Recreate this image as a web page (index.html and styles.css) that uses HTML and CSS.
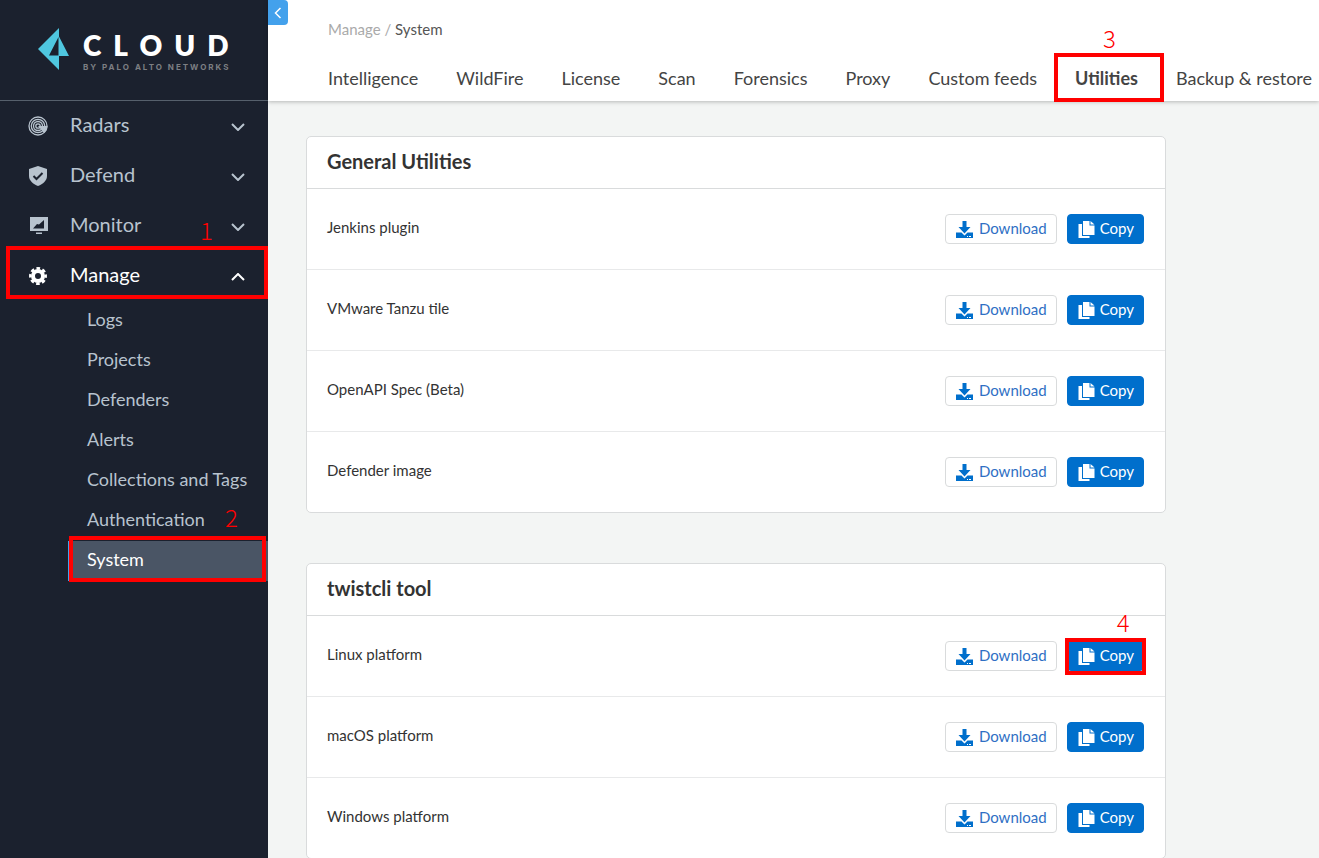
FILE: index.html
```html
<!DOCTYPE html>
<html lang="en">
<head>
<meta charset="utf-8">
<title>Manage / System</title>
<link rel="stylesheet" href="styles.css">
</head>
<body>
<svg class="sprite" aria-hidden="true">
  <symbol id="chevron" viewBox="0 0 14 8"><path d="M1 1l6 6 6-6" fill="none" stroke="currentColor" stroke-width="2"/></symbol>
  <symbol id="download" viewBox="0 0 17 17"><path d="M6.500 0h4v6h4L8.500 12.500 2.500 6h4z" fill="currentColor"/><path d="M0 11.500h5.500L8.500 14.500l3-3H17V17H0z" fill="currentColor"/><path d="M11 15.500h1M13 15.500h2" stroke="#fff" stroke-width="1"/></symbol>
  <symbol id="copy" viewBox="0 0 16 17"><path d="M4.500 0H11v4.500h5V14H4.500z" fill="currentColor"/><path d="M12 0l4 3.500h-4z" fill="currentColor"/><path d="M0 3h3.500v12H11v2H0z" fill="currentColor"/></symbol>
</svg>
<div class="app">
  <aside class="sidebar">
    <div class="brand">
      <svg class="brand-mark" viewBox="0 0 31 42" aria-hidden="true"><path fill="#4fc7e0" fill-rule="evenodd" d="M21 0v8.500L31 28H21v14L0 21zM20.500 9L11 27.500h9.500z"/></svg>
      <div class="brand-text">
        <span class="brand-name">CLOUD</span>
        <span class="brand-by">BY PALO ALTO NETWORKS</span>
      </div>
    </div>
    <nav class="nav">
      <button class="nav-item" type="button">
        <svg class="nav-icon" viewBox="0 0 20 20" aria-hidden="true"><g fill="none" stroke="currentColor" stroke-width="1.300"><circle cx="10" cy="10" r="9"/><circle cx="10" cy="10" r="6.700"/><circle cx="10" cy="10" r="4.500"/><circle cx="10" cy="10" r="2.200"/></g><path fill="currentColor" d="M10 10h9.500a9.500 9.500 0 0 1-3.500 7z"/></svg>
        <span class="nav-label">Radars</span><svg class="chevron"><use href="#chevron"/></svg>
      </button>
      <button class="nav-item" type="button">
        <svg class="nav-icon" viewBox="0 0 20 20" aria-hidden="true"><path fill="currentColor" d="M10 0l9 3v7c0 4.500-4 8-9 10-5-2-9-5.500-9-10V3z"/><path d="M5.500 10l3 3 6-6" fill="none" stroke="#1b212e" stroke-width="2"/></svg>
        <span class="nav-label">Defend</span><svg class="chevron"><use href="#chevron"/></svg>
      </button>
      <button class="nav-item" type="button">
        <svg class="nav-icon" viewBox="0 0 20 20" aria-hidden="true"><path fill="currentColor" fill-rule="evenodd" d="M2 1h18v14H2zM5 12.500h11V4l-5 4.500-2-.5z"/><path fill="currentColor" d="M8 16.500h6v1.500H8z"/></svg>
        <span class="nav-label">Monitor</span><svg class="chevron"><use href="#chevron"/></svg>
      </button>
      <div class="marked">
        <button class="nav-item is-open" type="button" aria-expanded="true">
          <svg class="nav-icon" viewBox="0 0 20 20" aria-hidden="true"><g fill="none" stroke="currentColor"><circle cx="10" cy="10" r="5" stroke-width="4"/><circle cx="10" cy="10" r="7.700" stroke-width="2.500" stroke-dasharray="3.600 2.450" stroke-dashoffset="1.800"/></g></svg>
          <span class="nav-label">Manage</span><svg class="chevron"><use href="#chevron"/></svg>
        </button>
        <span class="frame frame-manage"></span><span class="step step-manage">1</span>
      </div>
      <ul class="subnav">
        <li><a href="#">Logs</a></li>
        <li><a href="#">Projects</a></li>
        <li><a href="#">Defenders</a></li>
        <li><a href="#">Alerts</a></li>
        <li><a href="#">Collections and Tags</a></li>
        <li><a href="#">Authentication</a></li>
        <li class="marked"><a class="is-current" href="#" aria-current="page">System</a><span class="frame frame-system"></span><span class="step step-system">2</span></li>
      </ul>
    </nav>
  </aside>
  <div class="content">
    <header class="topbar">
      <button class="collapse" type="button" aria-label="Collapse menu"><svg viewBox="0 0 8 12" aria-hidden="true"><path d="M6.500 1l-5 5 5 5" fill="none" stroke="#fff" stroke-width="1.500"/></svg></button>
      <div class="crumbs"><a href="#">Manage</a> <span>/</span> <b>System</b></div>
      <nav class="tabs">
        <a href="#">Intelligence</a><a href="#">WildFire</a><a href="#">License</a><a href="#">Scan</a><a href="#">Forensics</a><a href="#">Proxy</a><a href="#">Custom feeds</a>
        <span class="marked"><a class="is-active" href="#">Utilities</a><span class="frame frame-tab"></span><span class="step step-tab">3</span></span>
        <a href="#">Backup &amp; restore</a>
      </nav>
    </header>
    <main class="panels">
      <section class="card">
        <h2>General Utilities</h2>
        <div class="row"><span>Jenkins plugin</span><button class="btn" type="button"><svg class="icon"><use href="#download"/></svg>Download</button><button class="btn btn-primary" type="button"><svg class="icon"><use href="#copy"/></svg>Copy</button></div>
        <div class="row"><span>VMware Tanzu tile</span><button class="btn" type="button"><svg class="icon"><use href="#download"/></svg>Download</button><button class="btn btn-primary" type="button"><svg class="icon"><use href="#copy"/></svg>Copy</button></div>
        <div class="row"><span>OpenAPI Spec (Beta)</span><button class="btn" type="button"><svg class="icon"><use href="#download"/></svg>Download</button><button class="btn btn-primary" type="button"><svg class="icon"><use href="#copy"/></svg>Copy</button></div>
        <div class="row"><span>Defender image</span><button class="btn" type="button"><svg class="icon"><use href="#download"/></svg>Download</button><button class="btn btn-primary" type="button"><svg class="icon"><use href="#copy"/></svg>Copy</button></div>
      </section>
      <section class="card">
        <h2>twistcli tool</h2>
        <div class="row"><span>Linux platform</span><button class="btn" type="button"><svg class="icon"><use href="#download"/></svg>Download</button><div class="marked"><button class="btn btn-primary" type="button"><svg class="icon"><use href="#copy"/></svg>Copy</button><span class="frame frame-copy"></span><span class="step step-copy">4</span></div></div>
        <div class="row"><span>macOS platform</span><button class="btn" type="button"><svg class="icon"><use href="#download"/></svg>Download</button><button class="btn btn-primary" type="button"><svg class="icon"><use href="#copy"/></svg>Copy</button></div>
        <div class="row"><span>Windows platform</span><button class="btn" type="button"><svg class="icon"><use href="#download"/></svg>Download</button><button class="btn btn-primary" type="button"><svg class="icon"><use href="#copy"/></svg>Copy</button></div>
      </section>
    </main>
  </div>
</div>
</body>
</html>
```
FILE: styles.css
```css
* { box-sizing: border-box; }
body { margin: 0; font-family: Lato, "Liberation Sans", sans-serif; color: #333; background: #f3f5f4; }
a { color: inherit; text-decoration: none; }
button { font: inherit; cursor: pointer; }
.sprite { position: absolute; width: 0; height: 0; }
.app { display: flex; height: 100vh; overflow: hidden; }

.sidebar { flex: 0 0 268px; background: #1b212e; color: #b8c3ce; }
.brand { display: flex; align-items: center; gap: 14px; height: 101px; padding: 0 0 3px 38px; border-bottom: 1px solid #56606c; }
.brand-mark { width: 31px; height: 42px; }
.brand-text { display: flex; flex-direction: column; gap: 3px; padding-top: 6px; white-space: nowrap; }
.brand-name { font-size: 28px; line-height: 28px; font-weight: 800; letter-spacing: 12px; color: #fff; }
.brand-by { font: 700 8px/10px Inter, sans-serif; letter-spacing: 2px; color: #7d7f83; }
.nav-item { display: flex; align-items: center; width: 100%; height: 50px; padding: 0 23px 4px 28px; border: 0; background: none; color: inherit; font-size: 20px; text-align: left; }
.nav-icon { width: 20px; height: 20px; margin-top: 4px; }
.nav-label { flex: 1; padding-left: 22px; }
.chevron { width: 14px; height: 8px; margin-top: 5px; }
.is-open { color: #fff; }
.is-open .chevron { transform: rotate(180deg); }
.subnav { margin: 0 0 0 68px; padding: 0; list-style: none; font-size: 18px; }
.subnav a { display: block; height: 40px; padding-left: 18px; border-left: 1px solid transparent; line-height: 36px; }
.subnav .is-current { background: #4a5565; border-color: #43a1ec; color: #fff; }

.content { flex: 1; min-width: 0; }
.topbar { position: relative; height: 101px; padding: 19px 0 0 60px; background: #fff; box-shadow: 0 1px 4px rgba(0, 0, 0, .25); }
.collapse { position: absolute; top: 0; left: 0; width: 20px; height: 25px; padding: 0; border: 0; border-radius: 0 4px 4px 0; background: #43a1ec; }
.collapse svg { width: 8px; height: 12px; }
.crumbs { font-size: 15px; line-height: 20px; color: #aaa; }
.crumbs b { font-weight: 400; color: #555; }
.tabs { display: flex; gap: 38px; padding-top: 27px; font-size: 18px; line-height: 24px; color: #444; white-space: nowrap; }
.tabs .is-active { font-weight: 700; }

.panels { display: flex; flex-direction: column; gap: 50px; padding: 35px 38px; }
.card { max-width: 860px; border: 1px solid #d9dbdc; border-radius: 5px; background: #fff; }
.card h2 { margin: 0; height: 52px; padding-left: 20px; border-bottom: 1px solid #d9dbdc; font-size: 20px; line-height: 48px; font-weight: 700; }
.row { display: flex; align-items: center; gap: 10px; height: 81px; padding: 0 21px 0 20px; border-bottom: 1px solid #e8e9ea; font-size: 15px; }
.row:last-child { height: 80px; border-bottom: 0; }
.row > span { flex: 1; padding-bottom: 4px; }
.btn { display: flex; align-items: center; gap: 6px; height: 30px; padding: 0 9px 2px 10px; border: 1px solid #d9dbdc; border-radius: 4px; background: #fff; color: #2f6fc4; }
.icon { width: 17px; height: 17px; margin-top: 3px; color: #006fcc; }
.btn-primary { gap: 5px; border-color: #006fcc; background: #006fcc; color: #fff; }
.btn-primary .icon { color: #fff; }

.marked { position: relative; }
.frame { position: absolute; border: 4px solid #f00; pointer-events: none; }
.step { position: absolute; font: 300 24px/24px "Noto Sans CJK KR", sans-serif; color: #f00; }
.frame-manage { inset: -5px 0 2px 6px; }
.step-manage { left: 200px; top: -33px; }
.frame-system { inset: -5px 2px -1px 1px; }
.step-system { left: 157px; top: -36px; }
.frame-tab { inset: -13px -26px -12px -21px; }
.step-tab { left: 28px; top: -40px; }
.frame-copy { inset: -3px -2px -4px -2px; }
.step-copy { left: 50px; top: -31px; }
```
